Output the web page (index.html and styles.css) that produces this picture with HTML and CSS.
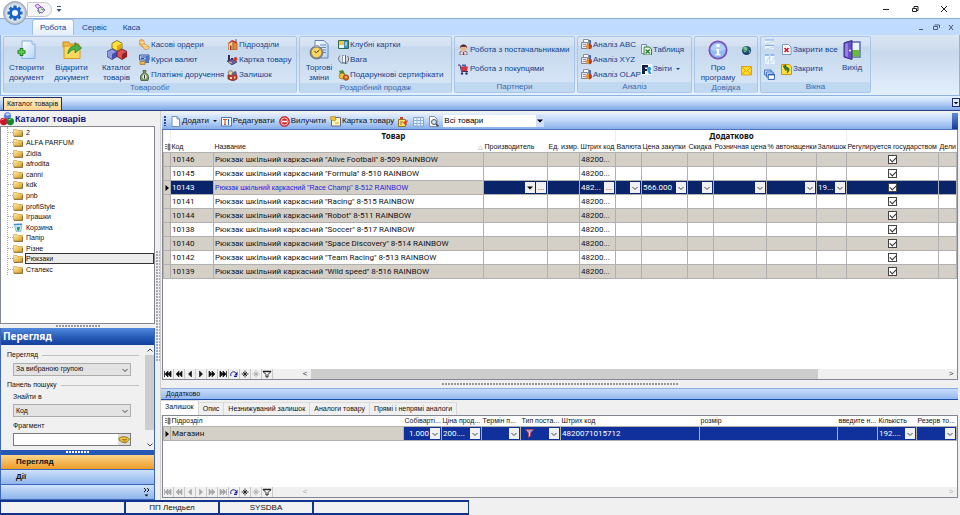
FILE: index.html
```html
<!DOCTYPE html>
<html lang="uk">
<head>
  <meta charset="UTF-8" />
  <meta name="viewport" content="width=device-width, initial-scale=1" />
  <title>Каталог товарів</title>
  <link rel="stylesheet" href="styles.css">
</head>
<body>
  <!-- Icon set -->
  <svg class="icon-set" aria-hidden="true">
    <defs>
      <linearGradient id="g-folder" x1="0" y1="0" x2="1" y2="1"><stop offset="0" stop-color="#fff0b0"/><stop offset="1" stop-color="#d9981c"/></linearGradient>
      <linearGradient id="g-page" x1="0" y1="0" x2="1" y2="1"><stop offset="0" stop-color="#fff"/><stop offset="1" stop-color="#b4d4f6"/></linearGradient>
      <radialGradient id="g-orb"><stop offset="0" stop-color="#fff"/><stop offset=".7" stop-color="#dfe6ee"/><stop offset="1" stop-color="#a9b4c4"/></radialGradient>
      <radialGradient id="g-globe" cx=".35" cy=".3"><stop offset="0" stop-color="#8fe0a0"/><stop offset=".5" stop-color="#2f7d66"/><stop offset="1" stop-color="#1d3f78"/></radialGradient>
    </defs>
    <symbol id="i-gear" viewBox="0 0 24 24">
      <circle cx="12" cy="12" r="11.5" fill="url(#g-orb)" stroke="#8d9bb0" stroke-width=".8"/>
      <path d="M12 4.500v15M4.500 12h15M6.700 6.700l10.600 10.600M17.300 6.700L6.700 17.300" stroke="#1b66c4" stroke-width="3.200"/>
      <circle cx="12" cy="12" r="5.800" fill="#1b66c4"/>
      <circle cx="12" cy="12" r="3" fill="#f4f8fc"/>
    </symbol>
    <symbol id="i-link" viewBox="0 0 12 12">
      <path d="M1 2.500l3-1.500 3 3-3 2z" fill="#e6d4f6" stroke="#9a5cc8"/>
      <path d="M4 5l4-1 3 3-3 3-3-1z" fill="#d6e8d8" stroke="#8a64b4"/>
      <path d="M3 7l3 4M7 6l3 1" stroke="#53a070"/>
    </symbol>
    <symbol id="i-newdoc" viewBox="0 0 20 20">
      <path d="M5 1h10l3 3v14.500H5z" fill="url(#g-page)" stroke="#85aee0"/>
      <path d="M15 1v3h3" fill="#fff" stroke="#85aee0"/>
      <path d="M4.500 8v8M.5 12h8" stroke="#1d7f1d" stroke-width="3.600"/>
      <path d="M4.500 9v6M1.500 12h6" stroke="#5fce4c" stroke-width="1.800"/>
    </symbol>
    <symbol id="i-open" viewBox="0 0 20 20">
      <path d="M1 2h6l1 2h9v3H1z" fill="#f2b93c" stroke="#c98b1a"/>
      <path d="M2 6h16v12.500H2z" fill="#ffd95c" stroke="#d29a20"/>
      <path d="M6 14c0-5 3-8 7-8V2.500L19.500 8 13 13v-3.500c-3 0-5 1.500-7 4.500z" fill="#49b04a" stroke="#1f7a2b" stroke-width=".7"/>
    </symbol>
    <symbol id="i-cubes" viewBox="0 0 20 20">
      <path d="M10 .5l5 2.800v5L10 11 5 8.300v-5z" fill="#ffe23b" stroke="#5b4a10" stroke-width=".7"/>
      <path d="M10 6l5-2.700v5L10 11z" fill="#e0a800"/>
      <path d="M5 9l5 2.500v5L5 19.500l-5-3v-5z" fill="#8f9ae6" stroke="#26285c" stroke-width=".7"/>
      <path d="M5 14l5-2.500v5l-5 3z" fill="#4650b0"/>
      <path d="M15 9l5 2.500v5l-5 3-5-3v-5z" fill="#e05252" stroke="#4c1212" stroke-width=".7"/>
      <path d="M15 14l5-2.500v5l-5 3z" fill="#9c1e1e"/>
    </symbol>
    <symbol id="i-balls" viewBox="0 0 14 14">
      <circle cx="7.500" cy="3.800" r="3.500" fill="#5a7fe0"/><path d="M5 2l3-1 2.500 1.500L7 4z" fill="#b8ccff"/>
      <circle cx="3.700" cy="9.500" r="3.700" fill="#d0142c"/><path d="M1.500 8l3-1.500" stroke="#ff9a9a"/>
      <circle cx="10.300" cy="9.500" r="3.700" fill="#128a2c"/><path d="M8.500 8l3-1.500" stroke="#8ae69a"/>
    </symbol>
    <symbol id="i-coins" viewBox="0 0 11 11">
      <path d="M0 2.500C0 0 5 0 5 2.500v2l5 3c1 2-2 3.500-4 3L3 7.500 0 5z" fill="#f3b95a" stroke="#c4742c" stroke-width=".6"/>
      <path d="M1 2.800c1 1 3 1 4 0M4 6c1 1 3 1 4 0M5.500 8.500c1.500 1 3 .8 4 0" fill="none" stroke="#fff0b8"/>
    </symbol>
    <symbol id="i-rates" viewBox="0 0 11 11">
      <path d="M.5 1h9.500v5H.5z" fill="#bcd0f2" stroke="#3458a4"/>
      <path d="M2 3h5M2 4.500h3" stroke="#2f58b0"/><path d="M7 2h3v7H6z" fill="#4c73c4"/>
      <path d="M1 7.500h5v3H1z" fill="#e6b84a" stroke="#8c6420" stroke-width=".6"/>
    </symbol>
    <symbol id="i-bag" viewBox="0 0 11 11">
      <path d="M4 .5h3L6.500 3C9 4 10.500 7 9 10.500H2C.5 7 2 4 4.500 3z" fill="#7d9a68" stroke="#34492c" stroke-width=".7"/>
      <circle cx="5.500" cy="6.800" r="2.200" fill="#f2f0c8"/><path d="M5.500 5v3.600" stroke="#333"/>
    </symbol>
    <symbol id="i-house" viewBox="0 0 11 11">
      <path d="M0 5l5-4 5 2v2L6 3z" fill="#c62828"/><path d="M1.500 5L5 2.500 6 4v7H1.500z" fill="#fbd98c" stroke="#c05a20" stroke-width=".6"/>
      <path d="M6 4l4-.5V11H6z" fill="#e88a3c" stroke="#9c3a18" stroke-width=".6"/><path d="M3 6.500h1.500V11H3z" fill="#a03020"/><path d="M9 0v3" stroke="#4464b4"/>
    </symbol>
    <symbol id="i-card" viewBox="0 0 11 11">
      <path d="M1 1h2v6H1zM4 4h2v4H4z" fill="#2c2c58"/><path d="M0 7l5-2 5 3-5 3z" fill="#6a5a9c" stroke="#26264a" stroke-width=".6"/>
      <circle cx="8.500" cy="5" r="2" fill="#c83a34"/><path d="M2 8l3 1" stroke="#e6c450"/>
    </symbol>
    <symbol id="i-rest" viewBox="0 0 11 11">
      <path d="M1 5l4-2 5 2v4l-4 2-5-2z" fill="#b43c3c" stroke="#5c1414" stroke-width=".6"/>
      <circle cx="3.500" cy="3" r="2.300" fill="#e3d7b0" stroke="#5a4a2c" stroke-width=".6"/><path d="M6 2l3-1 1 3-3 1z" fill="#5a6494"/><path d="M3 7h2v2H3zM7 6.500h1.500v2H7z" fill="#ffe27a"/>
    </symbol>
    <symbol id="i-shift" viewBox="0 0 20 20">
      <path d="M6 .5h9l4 4V18H6z" fill="url(#g-page)" stroke="#5d84bc"/>
      <path d="M11 5h6M12 7.500h5M14 10h3M14 12.500h3" stroke="#5c8ccc"/>
      <circle cx="7.500" cy="12.500" r="6.500" fill="#8c8c8c" stroke="#555" stroke-width=".6"/>
      <circle cx="7.500" cy="12.500" r="4.800" fill="#ffd65a"/><path d="M7.500 12.500l3-2.500M7.500 12.500l-2-1" stroke="#333"/>
      <path d="M5.500 5h4v2h-4z" fill="#aaa"/>
    </symbol>
    <symbol id="i-club" viewBox="0 0 11 11">
      <path d="M.5 1.500h10v8H.5z" fill="#dff2e6" stroke="#2c6a54"/><path d="M1 2h5v4H1z" fill="#f0c848"/><path d="M6 2h4v7H6z" fill="#3c8cc8"/><path d="M2 7.500h3M7 4h2M7 6h2" stroke="#fff"/>
    </symbol>
    <symbol id="i-scale" viewBox="0 0 11 11">
      <path d="M2 1.500C0 4 0 7 3.500 9M5 1v8M7.500 1v9M3.500 9h6M9.500 2c1.500 2 1.500 4 0 6" fill="none" stroke="#5c6474"/><path d="M5 2h2v6H5z" fill="#fff"/>
    </symbol>
    <symbol id="i-gift" viewBox="0 0 11 11">
      <path d="M1 1l4-1 2 4-4 2z" fill="#3c8c34"/><circle cx="4" cy="6" r="3" fill="#f0c038" stroke="#8c5c10" stroke-width=".6"/><circle cx="8" cy="7.500" r="2.800" fill="#d86a28" stroke="#7c2c10" stroke-width=".6"/><path d="M7 7h2" stroke="#ffe27a"/>
    </symbol>
    <symbol id="i-person" viewBox="0 0 11 11">
      <path d="M2 11V8l3-1.500L9 8v3z" fill="#e8e8f4" stroke="#3a2c44" stroke-width=".6"/><circle cx="5.500" cy="4" r="3.200" fill="#f2b28a"/>
      <path d="M1.800 4.500C1.500-1 9.500-1 9.200 4.500L8 2.800H3z" fill="#40202c"/><path d="M5.500 8v3" stroke="#c8282c" stroke-width="1.500"/>
    </symbol>
    <symbol id="i-cart" viewBox="0 0 11 11">
      <path d="M0 1h2l1.500 6.500H10" fill="none" stroke="#38306c"/><path d="M2.500 2.500H10L9 7H3.500z" fill="#d8343c"/><path d="M4 2V.5h4V3" fill="#4858b4"/><circle cx="4" cy="9.500" r="1.200" fill="#38306c"/><circle cx="8.500" cy="9.500" r="1.200" fill="#38306c"/>
    </symbol>
    <symbol id="i-stat" viewBox="0 0 11 11">
      <path d="M2.500.5h5v4h-5z" fill="#fff" stroke="#8890a4"/><path d="M.5 3.500h6v6h-6z" fill="#e4e8f0" stroke="#7c8498"/><path d="M2 5.500h3M2 7.500h3" stroke="#8c94ac"/>
      <circle cx="8" cy="7.300" r="2.900" fill="#e8902c"/><path d="M8 7.300V4.400A2.900 2.900 0 0 1 8 10.200z" fill="#b83c2c"/><path d="M8 1h2v4H8z" fill="#4c6cc0"/>
    </symbol>
    <symbol id="i-excel" viewBox="0 0 11 11">
      <path d="M.5.500h5v9h-5z" fill="#fff" stroke="#6c8cb4"/><path d="M3 3h5l2.500 2v6H3z" fill="#e6f4e4" stroke="#2c7c34"/><path d="M4.700 5.500l4 4M8.700 5.500l-4 4" stroke="#1c7c2c" stroke-width="1.300"/>
    </symbol>
    <symbol id="i-report" viewBox="0 0 11 11">
      <path d="M0 0h11v11H0z" fill="#f4f8fc"/><path d="M1 1h6v2.500H4V5h2v2H4v3H1z" fill="#14203c"/><path d="M6 3h3c2 1 1.500 3 0 3.500L10.500 10H8L6.500 7z" fill="#2c9cc8"/>
    </symbol>
    <symbol id="i-info" viewBox="0 0 20 20">
      <circle cx="10" cy="10" r="8.700" fill="#8fbcf4" stroke="#7c4cb8" stroke-width="1.700"/><path d="M2.500 9C4 2 16 2 17.500 9c-4 3-11 3-15 0z" fill="#b8d4fa" opacity=".8"/>
      <circle cx="10" cy="5.500" r="1.800" fill="#fff"/><path d="M7.500 8.500h4V14H13v1.800H7V14h1.500v-3.800h-1z" fill="#fff" stroke="#7ca4e0" stroke-width=".4"/>
    </symbol>
    <symbol id="i-globe" viewBox="0 0 11 11">
      <circle cx="5.500" cy="5.500" r="4.600" fill="url(#g-globe)"/><path d="M3 2.500l3 .5-1 3-2 1M7.500 5l1.500 1-1 2" fill="none" stroke="#7cc88c"/>
    </symbol>
    <symbol id="i-mail" viewBox="0 0 11 11">
      <path d="M.5 1.500h10v8.500H.5z" fill="#ffdc28" stroke="#e0a010"/><path d="M1 2l4.500 4.500L10 2M1 9.500L4 6M10 9.500L7 6" fill="none" stroke="#d8940c" stroke-width=".8"/>
    </symbol>
    <symbol id="i-tileh" viewBox="0 0 11 11">
      <path d="M1 1h9v3.500H1zM1 6.500h9V10H1z" fill="#eef6ff"/><path d="M1 1h9M1 6.500h9" stroke="#7ca8e4"/><path d="M2 4.500l8-2M2 10l8-2" stroke="#c0d4ee"/>
    </symbol>
    <symbol id="i-tilev" viewBox="0 0 11 11">
      <path d="M1 1h4v9H1zM6.500 1h4v9h-4z" fill="#eef6ff"/><path d="M1 1h4M6.500 1h4" stroke="#7ca8e4" stroke-width="1.500"/><path d="M2 9l3-6M7.500 9l3-6" stroke="#c0d4ee"/>
    </symbol>
    <symbol id="i-cascade" viewBox="0 0 11 11">
      <path d="M.6 1h6.500v5H.6z" fill="#cfe2fa" stroke="#3c70c0"/><path d="M2.600 3h6.500v5H2.600z" fill="#dfedfc" stroke="#3c70c0"/><path d="M4.200 5.200h6.200v5.200H4.200z" fill="#fff" stroke="#2c5cac"/><path d="M4.200 5.700h6.200" stroke="#2c5cac" stroke-width="1.300"/>
    </symbol>
    <symbol id="i-closeall" viewBox="0 0 11 11">
      <path d="M1.500.500h6l2.500 2.500v7.500h-8.500z" fill="#fff" stroke="#7c98c0"/><path d="M3.500 4l4 4M7.500 4l-4 4" stroke="#d01824" stroke-width="1.700"/>
    </symbol>
    <symbol id="i-closeone" viewBox="0 0 11 11">
      <path d="M.5.500h8l2 2v8H.5z" fill="#ffe23c" stroke="#c8961c"/><path d="M2 2l3-1v2c4 0 4 4 1 6 1-3 0-4-1-4v2z" fill="#2c7c34" stroke="#14401c" stroke-width=".4"/>
    </symbol>
    <symbol id="i-exit" viewBox="0 0 20 20">
      <path d="M5 2h13v15H5z" fill="#e8f4ff" stroke="#5c6cac" stroke-width="1.500"/><path d="M10 10h7.500v6.500H10z" fill="#68bc3c"/><path d="M2 3l8-2.500v19L2 17z" fill="#6c50c8" stroke="#342c80"/><path d="M3 4l3-1v14l-3-1z" fill="#9480e4"/><circle cx="8" cy="10.500" r="1" fill="#fff"/>
    </symbol>
    <symbol id="i-folder" viewBox="0 0 10 9">
      <path d="M.5 1.500h3.500l1 1h4.500v5.500h-9z" fill="url(#g-folder)" stroke="#c89430" stroke-width=".6"/><path d="M1 8.400h8.700V4" fill="none" stroke="#6c501c" stroke-width=".8"/>
    </symbol>
    <symbol id="i-bin" viewBox="0 0 10 9">
      <path d="M1 1l8-.5L8 8.500H3z" fill="#bfe0f6" stroke="#6ca4d0" stroke-width=".6"/><path d="M1 1.500h8" stroke="#3c90cc"/><path d="M4 4l3 0-1 4-2-1z" fill="#2c9c54"/>
    </symbol>
    <symbol id="i-page" viewBox="0 0 11 11">
      <path d="M2 .5h5l2.500 2.500v7.500H2z" fill="#fff" stroke="#7890b8"/><path d="M7 .5V3h2.500" fill="none" stroke="#7890b8"/>
    </symbol>
    <symbol id="i-edit" viewBox="0 0 11 11">
      <path d="M.5 1.500h10v8.500H.5z" fill="#fff" stroke="#4878b8"/><path d="M2 3.500h4M4 3.500v5M3 8.500h2" stroke="#d8502c" stroke-width="1.200"/><path d="M7.500 3v6" stroke="#2c70c8" stroke-width="1.200"/>
    </symbol>
    <symbol id="i-stop" viewBox="0 0 11 11">
      <circle cx="5.500" cy="5.500" r="5" fill="#e03030" stroke="#a01818" stroke-width=".6"/><circle cx="5.500" cy="5.500" r="3.500" fill="#d02020" stroke="#fff" stroke-width=".8"/><path d="M3 5.500h5" stroke="#fff" stroke-width="1.600"/>
    </symbol>
    <symbol id="i-goods" viewBox="0 0 11 11">
      <path d="M1.500 1.500h9V10h-9z" fill="#fff6b8" stroke="#5c6c94"/><path d="M0 1l5-1 1 4-2 1-3-1z" fill="#f0c030" stroke="#8c6c14" stroke-width=".5"/><path d="M5 7h4" stroke="#c8a83c"/>
    </symbol>
    <symbol id="i-price" viewBox="0 0 11 11">
      <path d="M.5 3.500h7v7h-7z" fill="#ffe27a" stroke="#9c7420"/><path d="M2 1h3v2H2z" fill="#d04030"/><path d="M5 6l5-2-2 6-2-2z" fill="#d85028"/><path d="M2 6h3M2 8h2" stroke="#9c7420"/>
    </symbol>
    <symbol id="i-grid" viewBox="0 0 11 11">
      <path d="M.5 1.500h10v8.500H.5z" fill="#eef6ff" stroke="#7ca0d4"/><path d="M.5 4.500h10M.5 7.500h10M4 1.500V10M7.500 1.500V10" stroke="#8cb0e0"/>
    </symbol>
    <symbol id="i-preview" viewBox="0 0 11 11">
      <path d="M1.500.500h5L9 3v7.500H1.500z" fill="#fff" stroke="#8090a8"/><circle cx="6" cy="6" r="2.500" fill="#cfe4f8" stroke="#555"/><path d="M8 8l2.500 2.500" stroke="#444" stroke-width="1.500"/>
    </symbol>
    <symbol id="i-hand" viewBox="0 0 12 8">
      <path d="M1 2l4-1.500 5 1 1.500 2-2 1.500L8 7 4 6 1 4z" fill="#f0c040" stroke="#8c6410" stroke-width=".8"/><path d="M4 3.500h5M5 5h3" stroke="#8c6410" stroke-width=".7"/>
    </symbol>
    <symbol id="i-type" viewBox="0 0 9 9">
      <path d="M.5.500h8L5.500 4v3l-2 1.500V4z" fill="#f4b8c0" stroke="#b43c50" stroke-width=".8"/><path d="M2 2h5" stroke="#6c88d0"/>
    </symbol>
    <symbol id="n-first" viewBox="0 0 10 8"><path d="M1.500 1v6M5 1v6L2 4zM8 1v6L5 4z" stroke="currentColor" stroke-width=".8" fill="currentColor"/></symbol>
    <symbol id="n-pback" viewBox="0 0 10 8"><path d="M5 1v6L2 4zM8 1v6L5 4z" stroke="currentColor" stroke-width=".6" fill="currentColor"/></symbol>
    <symbol id="n-back" viewBox="0 0 10 8"><path d="M6.500 1v6l-3-3z" stroke="currentColor" stroke-width=".6" fill="currentColor"/></symbol>
    <symbol id="n-next" viewBox="0 0 10 8"><path d="M3.500 1v6l3-3z" stroke="currentColor" stroke-width=".6" fill="currentColor"/></symbol>
    <symbol id="n-pnext" viewBox="0 0 10 8"><path d="M2 1v6l3-3zM5 1v6l3-3z" stroke="currentColor" stroke-width=".6" fill="currentColor"/></symbol>
    <symbol id="n-last" viewBox="0 0 10 8"><path d="M2 1v6l3-3zM5 1v6l3-3zM8.500 1v6" stroke="currentColor" stroke-width=".8" fill="currentColor"/></symbol>
    <symbol id="n-redo" viewBox="0 0 10 8"><path d="M2 6C.5 2 5 .5 7 3" stroke="#1c1c8c" fill="none"/><path d="M8.500 1.500v4H5z" fill="#1c1c8c"/><path d="M5 6.500h3" stroke="#1c1c8c"/></symbol>
    <symbol id="n-star" viewBox="0 0 10 8"><path d="M5 .5v7M1.500 4h7M3 2l4 4M7 2L3 6" stroke="currentColor" stroke-width=".8"/></symbol>
    <symbol id="n-filter" viewBox="0 0 10 8"><path d="M1 1.500h8L6 4.500V7H4V4.500z" fill="#fff" stroke="#222"/><path d="M1 1.500h8" stroke="#222" stroke-width="1.500"/></symbol>
    <symbol id="n-down" viewBox="0 0 8 8"><path d="M1.500 3L4 5.500 6.500 3" fill="none" stroke="#444"/></symbol>
    <symbol id="n-tri" viewBox="0 0 8 8"><path d="M1 2.500h6L4 5.500z" fill="#000"/></symbol>
    <symbol id="n-mark" viewBox="0 0 6 8"><path d="M1.500 1v6l3.500-3z" fill="#000"/></symbol>
    <symbol id="n-cols" viewBox="0 0 6 8"><path d="M0 1.500h2M0 3.500h2M0 5.500h2" stroke="#555" stroke-width=".8"/><path d="M3 1h2v6H3z" fill="#999" stroke="#444" stroke-width=".6"/></symbol>
  </svg>

  <div class="app">
    <header class="titlebar">
      <button class="orb" aria-label="Меню програми"><svg><use href="#i-gear"/></svg></button>
      <div class="quick"><button aria-label="Швидкий доступ"><svg><use href="#i-link"/></svg></button></div>
      <button class="quick-more" aria-label="Налаштувати панель"><svg viewBox="0 0 6 8"><path d="M1 1.500h4" stroke="#3c5078"/><path d="M.5 4h5L3 7z" fill="#3c5078"/></svg></button>
      <div class="window-buttons">
        <button aria-label="Згорнути"><svg viewBox="0 0 8 8"><path d="M1 4.500h6" stroke="#222"/></svg></button>
        <button aria-label="Відновити"><svg viewBox="0 0 8 8"><path d="M1.500 3.500h4v3h-4zM3 3V1.500h4v4H6" fill="none" stroke="#222"/></svg></button>
        <button aria-label="Закрити програму"><svg viewBox="0 0 8 8"><path d="M1 1l6 6M7 1L1 7" stroke="#222"/></svg></button>
      </div>
    </header>

    <nav class="tabs">
      <a class="tab active" href="#">Робота</a>
      <a class="tab" href="#">Сервіс</a>
      <a class="tab" href="#">Каса</a>
      <div class="mdi-buttons">
        <button aria-label="Згорнути вікно"><svg viewBox="0 0 8 8"><path d="M2 6.500h4" stroke="#46506a"/></svg></button>
        <button aria-label="Відновити вікно"><svg viewBox="0 0 8 8"><path d="M1.500 3.500h4v3h-4zM2.500 2h5v3" fill="none" stroke="#46506a" stroke-width=".9"/></svg></button>
        <button aria-label="Закрити вікно"><svg viewBox="0 0 8 8"><path d="M2 2l4 5M6 2L2 7" stroke="#46506a"/></svg></button>
      </div>
    </nav>

    <div class="ribbon">
      <section class="group g-trade">
        <div class="group-body">
          <button class="big"><svg><use href="#i-newdoc"/></svg><span>Створити<br>документ</span></button>
          <button class="big"><svg><use href="#i-open"/></svg><span>Відкрити<br>документ</span></button>
          <button class="big"><svg><use href="#i-cubes"/></svg><span>Каталог<br>товарів</span></button>
          <div class="small-col wide">
            <button><svg><use href="#i-coins"/></svg>Касові ордери</button>
            <button><svg><use href="#i-rates"/></svg>Курси валют</button>
            <button><svg><use href="#i-bag"/></svg>Платіжні доручення</button>
          </div>
          <div class="small-col">
            <button><svg><use href="#i-house"/></svg>Підрозділи</button>
            <button><svg><use href="#i-card"/></svg>Картка товару</button>
            <button><svg><use href="#i-rest"/></svg>Залишок</button>
          </div>
        </div>
        <h2>Товарообіг</h2>
      </section>
      <section class="group g-retail">
        <div class="group-body">
          <button class="big"><svg><use href="#i-shift"/></svg><span>Торгові<br>зміни</span></button>
          <div class="small-col">
            <button><svg><use href="#i-club"/></svg>Клубні картки</button>
            <button><svg><use href="#i-scale"/></svg>Вага</button>
            <button><svg><use href="#i-gift"/></svg>Подарункові сертифікати</button>
          </div>
        </div>
        <h2>Роздрібний продаж</h2>
      </section>
      <section class="group g-partners">
        <div class="group-body">
          <div class="small-col two">
            <button><svg><use href="#i-person"/></svg>Робота з постачальниками</button>
            <button><svg><use href="#i-cart"/></svg>Робота з покупцями</button>
          </div>
        </div>
        <h2>Партнери</h2>
      </section>
      <section class="group g-analysis">
        <div class="group-body">
          <div class="small-col">
            <button><svg><use href="#i-stat"/></svg>Аналіз ABC</button>
            <button><svg><use href="#i-stat"/></svg>Аналіз XYZ</button>
            <button><svg><use href="#i-stat"/></svg>Аналіз OLAP</button>
          </div>
          <div class="small-col two">
            <button><svg><use href="#i-excel"/></svg>Таблиця</button>
            <button><svg><use href="#i-report"/></svg>Звіти <i class="caret"></i></button>
          </div>
        </div>
        <h2>Аналіз</h2>
      </section>
      <section class="group g-help">
        <div class="group-body">
          <button class="big"><svg><use href="#i-info"/></svg><span>Про<br>програму</span></button>
          <div class="small-col two">
            <button aria-label="Сайт"><svg><use href="#i-globe"/></svg></button>
            <button aria-label="Пошта"><svg><use href="#i-mail"/></svg></button>
          </div>
        </div>
        <h2>Довідка</h2>
      </section>
      <section class="group g-windows">
        <div class="group-body">
          <div class="small-col">
            <button aria-label="Горизонтально"><svg><use href="#i-tileh"/></svg></button>
            <button aria-label="Вертикально"><svg><use href="#i-tilev"/></svg></button>
            <button aria-label="Каскадом"><svg><use href="#i-cascade"/></svg></button>
          </div>
          <div class="small-col two">
            <button><svg><use href="#i-closeall"/></svg>Закрити все</button>
            <button><svg><use href="#i-closeone"/></svg>Закрити</button>
          </div>
          <button class="big"><svg><use href="#i-exit"/></svg><span>Вихід</span></button>
        </div>
        <h2>Вікна</h2>
      </section>
    </div>

    <div class="doc-tabs">
      <a class="doc-tab" href="#">Каталог товарів</a>
      <button class="doc-list" aria-label="Список вікон"><svg viewBox="0 0 8 8"><use href="#n-tri"/></svg></button>
    </div>

    <div class="workspace">
      <aside class="sidebar">
        <h1><svg><use href="#i-balls"/></svg>Каталог товарів</h1>
        <div class="tree-box">
          <ul class="tree">
            <li><svg><use href="#i-folder"/></svg><a href="#">2</a></li>
            <li><svg><use href="#i-folder"/></svg><a href="#">ALFA PARFUM</a></li>
            <li><svg><use href="#i-folder"/></svg><a href="#">Zidia</a></li>
            <li><svg><use href="#i-folder"/></svg><a href="#">afrodita</a></li>
            <li><svg><use href="#i-folder"/></svg><a href="#">canni</a></li>
            <li><svg><use href="#i-folder"/></svg><a href="#">kdk</a></li>
            <li><svg><use href="#i-folder"/></svg><a href="#">pnb</a></li>
            <li><svg><use href="#i-folder"/></svg><a href="#">profiStyle</a></li>
            <li><svg><use href="#i-folder"/></svg><a href="#">Іграшки</a></li>
            <li><svg><use href="#i-bin"/></svg><a href="#">Корзина</a></li>
            <li><svg><use href="#i-folder"/></svg><a href="#">Папір</a></li>
            <li><svg><use href="#i-folder"/></svg><a href="#">Різне</a></li>
            <li class="selected"><svg><use href="#i-folder"/></svg><a href="#">Рюкзаки</a></li>
            <li><svg><use href="#i-folder"/></svg><a href="#">Сталекс</a></li>
          </ul>
        </div>
        <div class="split-h"><i></i></div>
        <div class="navbar">
          <h2>Перегляд</h2>
          <div class="nav-panel">
            <form class="filters">
              <div class="legend"><span>Перегляд</span></div>
              <div class="select"><select aria-label="Перегляд"><option>За вибраною групою</option></select><svg><use href="#n-down"/></svg></div>
              <div class="legend"><span>Панель пошуку</span></div>
              <label for="find-in">Знайти в</label>
              <div class="select"><select id="find-in"><option>Код</option></select><svg><use href="#n-down"/></svg></div>
              <label for="fragment">Фрагмент</label>
              <div class="search"><input id="fragment" type="text"><button type="button" aria-label="Шукати"><svg><use href="#i-hand"/></svg></button></div>
            </form>
            <div class="vscroll">
              <svg viewBox="0 0 8 8"><path d="M1.500 5L4 2.500 6.500 5" fill="none" stroke="#444"/></svg>
              <i></i>
              <svg viewBox="0 0 8 8"><use href="#n-down"/></svg>
            </div>
          </div>
          <div class="nav-grip"><i></i></div>
          <button class="nav-item active">Перегляд</button>
          <button class="nav-item">Дії</button>
          <div class="nav-more"><button aria-label="Ще"><svg viewBox="0 0 8 10"><path d="M1 1l2 2-2 2M4 1l2 2-2 2" fill="none" stroke="#111"/><path d="M1.500 7.500h4L3.500 9.500z" fill="#111"/></svg></button></div>
        </div>
      </aside>

      <div class="split-v"><i></i></div>

      <main class="content">
        <div class="toolbar">
          <i class="grip"></i>
          <button><svg><use href="#i-page"/></svg>Додати<i class="caret"></i></button>
          <button><svg><use href="#i-edit"/></svg>Редагувати</button>
          <button><svg><use href="#i-stop"/></svg>Вилучити</button>
          <button><svg><use href="#i-goods"/></svg>Картка товару</button>
          <button aria-label="Ціни"><svg><use href="#i-price"/></svg></button>
          <button aria-label="Таблиця"><svg><use href="#i-grid"/></svg></button>
          <button aria-label="Перегляд друку"><svg><use href="#i-preview"/></svg></button>
          <div class="tool-select"><select aria-label="Фільтр товарів"><option>Всі товари</option></select><svg><use href="#n-tri"/></svg></div>
          <span class="tool-end"></span>
        </div>

        <div class="grid-box main-grid">
          <table class="grid">
            <colgroup>
              <col class="c-mark"><col class="c-code"><col><col class="c-maker"><col class="c-unit"><col class="c-bar">
              <col class="c-cur"><col class="c-buy"><col class="c-cur"><col class="c-retail"><col class="c-auto"><col class="c-rest">
              <col class="c-state"><col class="c-div">
            </colgroup>
            <thead>
              <tr class="bands"><th></th><th colspan="5">Товар</th><th colspan="6">Додатково</th><th colspan="2"></th></tr>
              <tr><th><svg><use href="#n-cols"/></svg></th><th>Код</th><th>Название<span class="sort">△</span></th><th>Производитель</th><th>Ед. измр.</th><th>Штрих код</th><th>Валюта</th><th>Цена закупки</th><th>Скидка</th><th>Розничная цена</th><th>% автонаценки</th><th>Залишок</th><th>Регулируется государством</th><th>Дели</th></tr>
            </thead>
            <tbody id="goods"></tbody>
          </table>
          <div class="grid-foot">
            <div class="navigator">
              <button aria-label="Перший"><svg><use href="#n-first"/></svg></button>
              <button aria-label="Сторінка назад"><svg><use href="#n-pback"/></svg></button>
              <button aria-label="Назад"><svg><use href="#n-back"/></svg></button>
              <button aria-label="Вперед"><svg><use href="#n-next"/></svg></button>
              <button aria-label="Сторінка вперед"><svg><use href="#n-pnext"/></svg></button>
              <button aria-label="Останній"><svg><use href="#n-last"/></svg></button>
              <button aria-label="Оновити"><svg><use href="#n-redo"/></svg></button>
              <button aria-label="Закладка"><svg><use href="#n-star"/></svg></button>
              <button aria-label="До закладки" disabled><svg><use href="#n-star"/></svg></button>
              <button aria-label="Фільтр"><svg><use href="#n-filter"/></svg></button>
            </div>
            <div class="hscroll"><span>&lt;</span><i></i><span>&gt;</span></div>
          </div>
        </div>

        <div class="split-h wide"><i></i></div>

        <section class="details">
          <h2>Додатково</h2>
          <div class="page-tabs">
            <a class="active" href="#">Залишок</a>
            <a href="#">Опис</a>
            <a href="#">Незнижуваний залишок</a>
            <a href="#">Аналоги товару</a>
            <a href="#">Прямі і непрямі аналоги</a>
          </div>
          <div class="grid-box rest-grid">
            <table class="grid">
              <colgroup>
                <col class="c-mark"><col><col class="d-cost"><col class="d-price"><col class="d-term"><col class="d-price">
                <col class="d-bar"><col class="d-size"><col class="d-price"><col class="d-term"><col class="d-price">
              </colgroup>
              <thead>
                <tr><th><svg><use href="#n-cols"/></svg></th><th>Підрозділ</th><th>Собіварті...</th><th>Ціна прод...</th><th>Термін п...</th><th>Тип поста...</th><th>Штрих код</th><th>розмір</th><th>введите н...</th><th>Кількість</th><th>Резерв то...</th></tr>
              </thead>
              <tbody>
                <tr class="picked">
                  <td class="mark"><svg><use href="#n-mark"/></svg></td>
                  <td class="plain">Магазин</td>
                  <td><div class="cell num">1.000<button aria-label="Вибрати"><svg><use href="#n-down"/></svg></button></div></td>
                  <td><div class="cell">200....<button aria-label="Вибрати"><svg><use href="#n-down"/></svg></button></div></td>
                  <td><div class="cell"><button aria-label="Вибрати"><svg><use href="#n-down"/></svg></button></div></td>
                  <td><div class="cell"><svg class="type"><use href="#i-type"/></svg><button aria-label="Вибрати"><svg><use href="#n-down"/></svg></button></div></td>
                  <td>4820071015712</td>
                  <td></td>
                  <td></td>
                  <td><div class="cell">192....<button aria-label="Вибрати"><svg><use href="#n-down"/></svg></button></div></td>
                  <td><div class="cell"><button aria-label="Вибрати"><svg><use href="#n-down"/></svg></button></div></td>
                </tr>
              </tbody>
            </table>
            <div class="grid-foot">
              <div class="navigator">
                <button aria-label="Перший" disabled><svg><use href="#n-first"/></svg></button>
                <button aria-label="Сторінка назад" disabled><svg><use href="#n-pback"/></svg></button>
                <button aria-label="Назад" disabled><svg><use href="#n-back"/></svg></button>
                <button aria-label="Вперед" disabled><svg><use href="#n-next"/></svg></button>
                <button aria-label="Сторінка вперед" disabled><svg><use href="#n-pnext"/></svg></button>
                <button aria-label="Останній" disabled><svg><use href="#n-last"/></svg></button>
                <button aria-label="Оновити"><svg><use href="#n-redo"/></svg></button>
                <button aria-label="Закладка"><svg><use href="#n-star"/></svg></button>
                <button aria-label="До закладки" disabled><svg><use href="#n-star"/></svg></button>
                <button aria-label="Фільтр"><svg><use href="#n-filter"/></svg></button>
              </div>
              <div class="hscroll off"><span>&lt;</span><span>&gt;</span></div>
            </div>
          </div>
        </section>
      </main>
    </div>

    <footer class="status">
      <span class="s-first"></span>
      <span>ПП Лендьел</span>
      <span>SYSDBA</span>
      <span class="s-last"></span>
    </footer>
  </div>

<script>
(() => {
  const goods = [
    ['10146', '"Alive Football" 8-509'],
    ['10145', '"Formula" 8-510'],
    ['10143', '"Race Champ" 8-512'],
    ['10141', '"Racing" 8-515'],
    ['10144', '"Robot" 8-511'],
    ['10138', '"Soccer" 8-517'],
    ['10140', '"Space Discovery" 8-514'],
    ['10142', '"Team Racing" 8-513'],
    ['10139', '"Wild speed" 8-516']
  ];
  const selected = '10143';

  const icon = id => `<svg><use href="#${id}"/></svg>`;
  const drop = `<button aria-label="Вибрати">${icon('n-down')}</button>`;
  const dots = '<button aria-label="Відкрити">...</button>';
  const cell = (text, buttons) => `<td><div class="cell">${text}${buttons}</div></td>`;
  const check = code => `<td class="check"><input type="checkbox" checked aria-label="Регулируется государством ${code}"></td>`;

  document.getElementById('goods').innerHTML = goods.map(([code, model]) => {
    const name = `Рюкзак шкільний каркасний ${model} RAINBOW`;
    if (code === selected) {
      return `<tr class="selected"><td class="mark">${icon('n-mark')}</td><td>${code}</td><td class="plain">${name}</td>` +
        cell('', `<button aria-label="Список">${icon('n-tri')}</button>${dots}`) + '<td></td>' +
        cell('482...', dots) + cell('', drop) + cell('566.000', drop) + cell('', drop) +
        cell('', drop) + cell('', drop) + cell('19...', drop) + check(code) + '<td></td></tr>';
    }
    return `<tr><td class="mark"></td><td>${code}</td><td>${name}</td><td></td><td></td><td>48200...</td>` +
      '<td></td>'.repeat(6) + check(code) + '<td></td></tr>';
  }).join('');
})();
</script>
</body>
</html>
```
FILE: styles.css
```css
* {
  margin: 0;
  padding: 0;
  box-sizing: border-box;
}
body {
  font-family: "Liberation Sans", Arial, sans-serif;
  font-size: 7px;
  line-height: 10px;
  color: #111;
  background: #f0f0f0;
}
button {
  border: none;
  background: none;
  font: inherit;
  color: inherit;
  cursor: pointer;
}
a {
  color: inherit;
  text-decoration: none;
}
svg {
  display: block;
  flex: none;
}
ul {
  list-style: none;
}
.icon-set {
  position: absolute;
  width: 0;
  height: 0;
}
.app {
  display: flex;
  flex-direction: column;
  min-height: 100vh;
}

/* Title bar */
.titlebar {
  position: relative;
  display: flex;
  align-items: center;
  height: 18px;
  padding-left: 27px;
  background: #fff;
}
.orb {
  position: absolute;
  left: 3px;
  top: 1px;
  z-index: 2;
}
.orb svg {
  width: 24px;
  height: 24px;
}
.quick {
  width: 25px;
  height: 15px;
  padding-left: 6px;
  border: 1px solid #c4c8d0;
  border-radius: 0 8px 8px 0;
  background: #f6f6f8;
}
.quick svg {
  width: 12px;
  height: 12px;
}
.quick-more {
  margin-left: 4px;
}
.quick-more svg {
  width: 6px;
  height: 8px;
}
.window-buttons,
.mdi-buttons {
  display: flex;
  margin-left: auto;
}
.window-buttons {
  gap: 21px;
  padding-right: 12px;
}
.window-buttons svg,
.mdi-buttons svg {
  width: 8px;
  height: 8px;
}

/* Ribbon */
.tabs,
.ribbon,
.toolbar,
.status {
  font-size: 8px;
}
.tabs {
  display: flex;
  align-items: flex-end;
  height: 17px;
  padding-left: 32px;
  border-top: 1px solid #8aaad4;
  background: #bfdbff;
  color: #15428b;
}
.tab {
  padding: 3px 7px 2px;
  border: 1px solid transparent;
  border-bottom: none;
}
.tab.active {
  width: 42px;
  padding: 3px 7px 2px;
  border-color: #9ebfe8;
  border-radius: 3px 3px 0 0;
  background: linear-gradient(#fff, #e3eefb);
}
.mdi-buttons {
  gap: 7px;
  padding: 0 5px 4px 0;
}
.ribbon {
  display: flex;
  gap: 2px;
  height: 61px;
  padding: 1px 2px 2px;
  border: 1px solid #8db2e3;
  border-width: 0 1px 1px;
  background: linear-gradient(#dbe6f4, #cfdded 20%, #c9d9ed 30%, #e3f0fd);
  color: #15428b;
}
.group {
  display: flex;
  flex-direction: column;
  border: 1px solid #a9c6e8;
  border-radius: 2px;
  background: linear-gradient(#dce7f5, #d2e0f1 16%, #c6d8ed 18%, #d9e8f8);
}
.group h2 {
  height: 10px;
  font-size: 8px;
  font-weight: normal;
  line-height: 10px;
  text-align: center;
  color: #3e6aaa;
  background: #c1d8f1;
}
.group-body {
  display: flex;
  flex: 1;
}
.g-trade { width: 294px; }
.g-retail { width: 153px; }
.g-partners { width: 121px; }
.g-analysis { width: 115px; }
.g-help { width: 64px; }
.g-windows { width: 111px; }
.big {
  display: flex;
  flex-direction: column;
  align-items: center;
  gap: 3px;
  width: 45px;
  padding-top: 3px;
  line-height: 10px;
}
.big svg {
  width: 20px;
  height: 20px;
}
.g-retail .big { width: 38px; }
.small-col {
  display: flex;
  flex-direction: column;
  justify-content: space-around;
}
.small-col.two {
  padding: 3px 0;
}
.small-col button,
.toolbar button {
  display: flex;
  align-items: center;
  gap: 1px;
  white-space: nowrap;
}
.small-col svg,
.toolbar button svg {
  width: 11px;
  height: 11px;
}
.small-col.wide { width: 88px; }
.g-partners .small-col { padding-left: 3px; }
.g-analysis .small-col { width: 63px; padding-left: 3px; }
.g-analysis .small-col.two { padding-left: 0; }
.g-help .big { width: 46px; }
.g-windows .small-col { width: 17px; padding-left: 3px; }
.g-windows .small-col.two { width: 58px; }
.g-windows .big { width: 32px; }
.caret {
  align-self: center;
  margin-left: 3px;
  border: 2px solid transparent;
  border-top-color: currentColor;
  border-bottom: none;
}

/* Open windows */
.doc-tabs {
  display: flex;
  align-items: flex-end;
  height: 15px;
  padding: 0 0 0 3px;
  border-bottom: 1px solid #2c3f8c;
  background: linear-gradient(#e8f2ff, #c3daf8 40%, #7ea7e4);
}
.doc-tab {
  height: 13px;
  padding: 1px 3px 0;
  border: 1px solid #1c2c6c;
  border-bottom: none;
  background: linear-gradient(#ffeec8, #ffd392);
}
.doc-list {
  width: 8px;
  height: 9px;
  margin: 0 0 3px auto;
  border: 1px solid #1c2c6c;
  background: #dcebff;
}
.doc-list svg {
  width: 6px;
  height: 6px;
}

.workspace {
  display: flex;
  flex: 1;
}

/* Left side */
.sidebar {
  display: flex;
  flex-direction: column;
  width: 155px;
}
.sidebar h1 {
  display: flex;
  align-items: center;
  height: 15px;
  font-size: 9px;
  color: #14147c;
}
.sidebar h1 svg {
  width: 14px;
  height: 14px;
  margin-right: 1px;
}
.tree-box {
  flex: 1;
  border: 1px solid #828790;
  background: #fff;
}
.tree {
  display: grid;
  grid-auto-rows: 1fr;
  height: 148px;
  margin-left: 6px;
  border-left: 1px dotted #aaa;
}
.tree li {
  display: flex;
  align-items: center;
}
.tree li::before {
  content: "";
  width: 5px;
  border-top: 1px dotted #aaa;
}
.tree svg {
  width: 10px;
  height: 9px;
  margin-right: 2px;
}
.tree a {
  flex: 1;
  padding: 0 1px;
  line-height: 9px;
}
.tree .selected a {
  border: 1px solid #333;
  padding: 0;
  background: #ececec;
}
.split-h {
  display: flex;
  justify-content: center;
  align-items: center;
  height: 4px;
}
.split-h i,
.nav-grip i {
  width: 44px;
  height: 3px;
  background: radial-gradient(circle at 1px 1px, #999 1px, transparent 1px) 0 0 / 3px 3px;
}
.split-h.wide { height: 8px; }
.split-h.wide i { width: 236px; }
.split-v {
  display: flex;
  align-items: center;
  width: 5px;
}
.split-v i {
  width: 4px;
  height: 110px;
  margin-left: 1px;
  background: radial-gradient(circle at 1px 1px, #aaa 1px, transparent 1px) 0 0 / 3px 3px;
}
.navbar {
  border: 1px solid #3c66b8;
  border-top: none;
}
.navbar h2 {
  height: 17px;
  padding-left: 2px;
  font-family: "Noto Sans", sans-serif;
  font-size: 10px;
  line-height: 16px;
  color: #fff;
  background: linear-gradient(#5288dc, #2458b4 60%, #14409c);
}
.nav-panel {
  display: flex;
  height: 105px;
  background: #f0f0f0;
}
.filters {
  display: flex;
  flex-direction: column;
  flex: 1;
  padding: 5px 6px 0;
}
.legend {
  display: flex;
  align-items: center;
  gap: 4px;
  height: 11px;
  margin-bottom: 2px;
}
.legend::after {
  content: "";
  flex: 1;
  border-top: 1px solid #c0c0c0;
}
.filters label {
  padding: 0 0 2px 6px;
}
.select,
.search {
  position: relative;
  display: flex;
  width: 118px;
  height: 13px;
  margin: 0 0 4px 6px;
}
.select select {
  width: 100%;
  padding-left: 2px;
  border: 1px solid #adadad;
  appearance: none;
  font: inherit;
  color: inherit;
  background: #e3e3e3;
}
.select svg {
  position: absolute;
  right: 2px;
  top: 3px;
  width: 8px;
  height: 8px;
}
.search {
  border: 1px solid #7a7a7a;
  background: #fff;
}
.search input {
  flex: 1;
  min-width: 0;
  border: none;
  font: inherit;
}
.search button {
  background: #dcdcdc;
}
.search svg {
  width: 12px;
  height: 8px;
}
.vscroll {
  display: flex;
  flex-direction: column;
  align-items: center;
  width: 9px;
  padding: 1px 0;
}
.vscroll svg {
  width: 8px;
  height: 9px;
}
.vscroll i {
  width: 9px;
  height: 75px;
  background: #cdcdcd;
}
.vscroll svg:last-child {
  margin-top: auto;
}
.nav-grip {
  display: flex;
  justify-content: center;
  height: 5px;
  padding-top: 1px;
  background: #2458b4;
}
.nav-grip i {
  width: 23px;
  background-image: radial-gradient(circle at 1px 1px, #fff 1px, transparent 1px);
}
.nav-item,
.nav-more {
  display: block;
  width: 100%;
  height: 14px;
  padding-left: 15px;
  font-size: 8px;
  font-weight: bold;
  text-align: left;
  background: linear-gradient(#cfe2fc, #8fb4ec);
}
.nav-item {
  height: 15px;
  border-bottom: 1px solid #3c66b8;
}
.nav-item.active {
  background: linear-gradient(#fbd58a, #ee9c28);
}
.nav-more {
  display: flex;
  justify-content: flex-end;
  align-items: center;
  padding-right: 3px;
}
.nav-more svg {
  width: 8px;
  height: 10px;
}

/* Right side */
.content {
  display: flex;
  flex-direction: column;
  flex: 1;
  min-width: 0;
  padding: 2px 2px 2px 0;
  border-left: 1px solid #d0d0d0;
}
.toolbar {
  display: flex;
  align-items: center;
  gap: 4px;
  height: 17px;
  margin-left: 1px;
  border-bottom: 1px solid #4c74bc;
  background: linear-gradient(#e6f0ff, #bcd5f8 50%, #86aee8);
}
.grip {
  width: 2px;
  height: 10px;
  margin: 0 0 0 2px;
  background: linear-gradient(#2c4c8c 2px, transparent 2px) 0 0 / 2px 3px;
}
.tool-select {
  position: relative;
  display: flex;
  width: 101px;
  height: 12px;
}
.tool-select select {
  width: 100%;
  padding-left: 1px;
  border: none;
  appearance: none;
  font: inherit;
  background: #fff;
}
.tool-select svg {
  position: absolute;
  right: 0;
  top: 0;
  width: 8px;
  height: 12px;
  background: #cfe0f8;
}
.tool-end {
  align-self: stretch;
  width: 6px;
  margin-left: auto;
  background: linear-gradient(#5c8cdc, #1c3c94);
}
.grid-box {
  display: flex;
  flex-direction: column;
  margin-left: 1px;
  border: 1px solid #828790;
  background: #fff;
}
.main-grid {
  flex: 1;
  border-top: none;
}
.grid {
  width: 100%;
  table-layout: fixed;
  border-collapse: collapse;
}
.grid th {
  height: 10px;
  padding: 0 0 0 1px;
  font-weight: normal;
  line-height: 10px;
  text-align: left;
  white-space: nowrap;
}
.grid .bands th {
  height: 12px;
  border-left: 1px solid #eee;
  font-family: "Noto Sans", sans-serif;
  font-size: 8px;
  font-weight: bold;
  line-height: 12px;
  text-align: center;
}
.grid th:last-child {
  overflow: hidden;
}
.sort {
  float: right;
  font-size: 6px;
  color: #888;
}
.grid td {
  height: 14px;
  padding: 0 1px;
  border: 1px solid #b0b0b0;
  overflow: hidden;
  font-family: Roboto, sans-serif;
  font-size: 8px;
  line-height: 12px;
  white-space: nowrap;
}
.grid svg {
  width: 6px;
  height: 8px;
}
.grid tbody tr:nth-child(odd) td,
.grid tbody td.mark {
  background: #d4d0c8;
}
.grid td.mark {
  padding: 0;
}
.grid tbody tr.selected td {
  border-top: 1px dashed #6c6c8c;
  border-bottom: 1px dashed #6c6c8c;
  color: #fff;
  background: #0a246a;
}
.grid tbody tr.picked td {
  color: #fff;
  background: #10309c;
}
.grid tbody tr.selected td.mark,
.grid tbody tr.selected td.plain,
.grid tbody tr.picked td.mark,
.grid tbody tr.picked td.plain {
  color: #111;
  background: #d4d0c8;
}
.grid tbody tr.selected td.plain {
  font-family: "Liberation Sans", Arial, sans-serif;
  font-size: 7px;
  color: #2020e0;
}
.cell {
  display: flex;
  align-items: center;
  gap: 1px;
}
.cell.num {
  justify-content: flex-end;
}
.cell button {
  width: 10px;
  height: 11px;
  color: #333;
  line-height: 8px;
  background: #f0f0f0;
}
.cell button:first-of-type {
  margin-left: auto;
}
.cell.num button:first-of-type {
  margin-left: 0;
}
.cell button svg {
  width: 8px;
  height: 8px;
  margin: auto;
}
.cell svg.type {
  width: 9px;
  height: 9px;
  margin-left: 3px;
}
.grid td.check {
  text-align: center;
  line-height: 0;
}
.check input {
  position: relative;
  width: 9px;
  height: 9px;
  border: 1px solid #444;
  appearance: none;
  background: #fff;
  vertical-align: middle;
}
.check input:checked::after {
  content: "";
  position: absolute;
  left: 2px;
  top: 0;
  width: 3px;
  height: 5px;
  border: solid #333;
  border-width: 0 1px 1px 0;
  transform: rotate(45deg);
}
.c-mark { width: 7px; }
.c-code { width: 43px; }
.c-maker { width: 64px; }
.c-unit { width: 32px; }
.c-bar { width: 36px; }
.c-cur { width: 26px; }
.c-buy { width: 46px; }
.c-retail { width: 53px; }
.c-auto { width: 50px; }
.c-rest { width: 30px; }
.c-state { width: 92px; }
.c-div { width: 18px; }
.d-cost { width: 38px; }
.d-price { width: 40px; }
.d-term { width: 39px; }
.d-bar { width: 139px; }
.d-size { width: 138px; }
.grid-foot {
  display: flex;
  height: 10px;
  margin-top: auto;
  background: #f0f0f0;
}
.navigator {
  display: flex;
  width: 136px;
}
.navigator button {
  width: 11px;
  border: 1px solid #c8c8c8;
  border-width: 0 1px 0 0;
}
.navigator button:disabled {
  color: #a8a8a8;
}
.navigator svg {
  width: 10px;
  height: 8px;
}
.hscroll {
  display: flex;
  flex: 1;
  justify-content: space-between;
  font-size: 8px;
  line-height: 9px;
}
.hscroll span {
  width: 12px;
  text-align: center;
  color: #333;
}
.hscroll.off span {
  color: #aaa;
}
.hscroll i {
  width: 77%;
  margin-right: auto;
  background: #cdcdcd;
}

.details h2 {
  height: 12px;
  padding-left: 5px;
  border-top: 1px solid #8aaee4;
  border-bottom: 1px solid #1c4cac;
  font-size: 7px;
  font-weight: normal;
  background: linear-gradient(#c8dcfa, #94b8ee);
}
.page-tabs {
  display: flex;
  align-items: flex-end;
  height: 15px;
}
.page-tabs a {
  height: 13px;
  padding: 1px 4px;
  border-right: 1px solid #d8d8d8;
  border-top: 1px solid #dcdcdc;
}
.page-tabs a.active {
  height: 15px;
  background: #fff;
}
.rest-grid {
  height: 83px;
}

/* Status bar */
.status {
  display: flex;
  height: 15px;
  text-align: center;
}
.status span {
  width: 94px;
  border: solid #12348c;
  border-width: 2px 1px;
  line-height: 11px;
  background: #f2f2f2;
}
.status .s-first { width: 125px; }
.status .s-last { width: 156px; }
```
